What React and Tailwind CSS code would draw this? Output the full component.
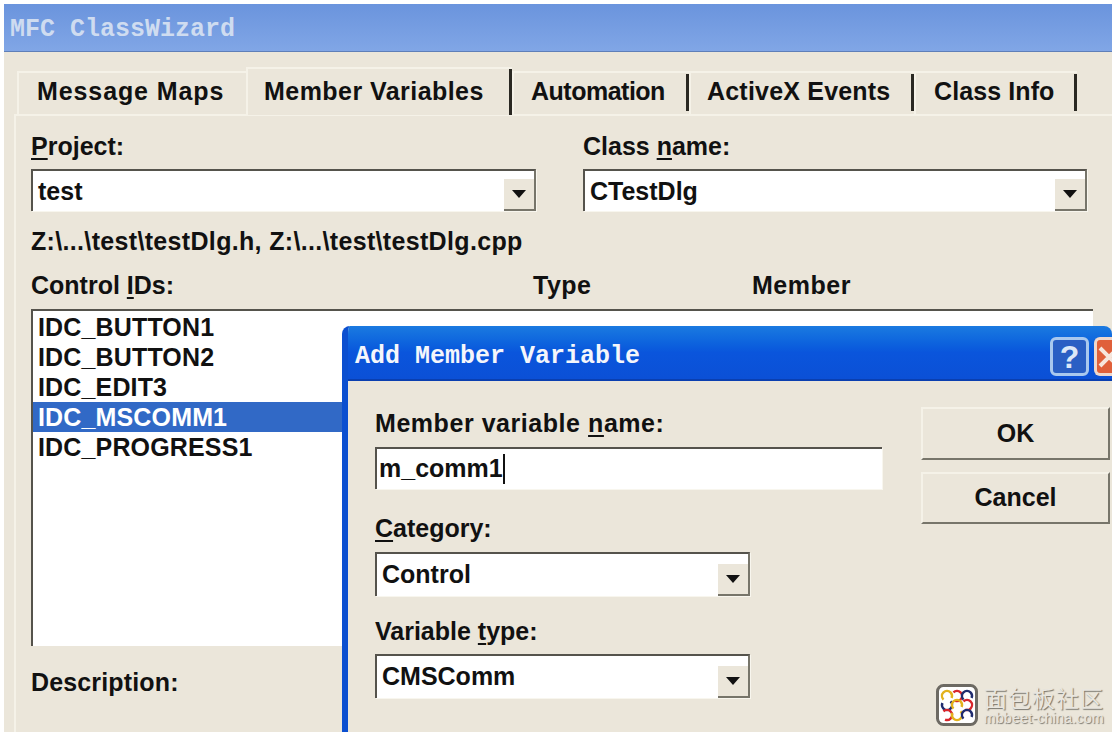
import { Fragment } from 'react'

const tabs = [
  { label: 'Message Maps', width: 'w-[229px]', text: 'pl-[18px] tracking-[0.9px]', noEdge: true },
  { label: 'Member Variables', width: 'w-[266px]', text: 'pl-[16px] tracking-[0.45px]', active: true },
  { label: 'Automation', width: 'w-[177px]', text: 'pl-[17px] tracking-[-0.5px]' },
  { label: 'ActiveX Events', width: 'w-[225px]', text: 'pl-[16px] tracking-[0.2px]' },
  { label: 'Class Info', width: 'w-[163px]', text: 'pl-[18px] tracking-[0.1px]' },
]

const controlIds = ['IDC_BUTTON1', 'IDC_BUTTON2', 'IDC_EDIT3', 'IDC_MSCOMM1', 'IDC_PROGRESS1']

const logoArcs = [
  [11, 12, '#e3b21c', 135],
  [21, 12, '#d8262c', 225],
  [31, 12, '#1f2b6e', 135],
  [11, 21, '#1f2b6e', 315],
  [21, 21, '#e3b21c', 135],
  [31, 21, '#d8262c', 225],
  [11, 31, '#d8262c', 225],
  [21, 31, '#e3b21c', 315],
  [31, 31, '#1f2b6e', 135],
]

function Arrow() {
  return (
    <span className="flex h-[32px] w-[30px] shrink-0 items-center justify-center self-end border-b-2 border-[#77756a] bg-[#ebe6da]">
      <svg width="14" height="8" viewBox="0 0 14 8" aria-hidden>
        <path d="M0 0h14L7 8z" fill="#111" />
      </svg>
    </span>
  )
}

function Combo({ value, className }) {
  return (
    <div
      className={`flex border-t-2 border-r-2 border-l-2 border-t-[#55534c] border-r-[#77756a] border-l-[#55534c] bg-white shadow-[1px_1px_0_#f8f6ee] ${className}`}
    >
      <span className="flex-1 pl-[5px] leading-[40px]">{value}</span>
      <Arrow />
    </div>
  )
}

function Underlined({ before = '', letter, after }) {
  return (
    <Fragment>
      {before}
      <span className="underline underline-offset-[3px]">{letter}</span>
      {after}
    </Fragment>
  )
}

function Logo() {
  return (
    <svg width="42" height="42" viewBox="0 0 42 42" aria-hidden>
      <rect x="1.5" y="1.5" width="39" height="39" rx="6" fill="#fff" stroke="#6d6a63" strokeWidth="3" />
      {logoArcs.map(([cx, cy, color, angle]) => (
        <circle
          key={`${cx}-${cy}`}
          cx={cx}
          cy={cy}
          r="5"
          fill="none"
          stroke={color}
          strokeWidth="2.4"
          strokeDasharray="21 11"
          transform={`rotate(${angle} ${cx} ${cy})`}
        />
      ))}
    </svg>
  )
}

export default function App() {
  return (
    <div className="relative h-[736px] w-[1116px] overflow-hidden bg-white px-[4px] pt-[4px] pb-[4px] font-['Liberation_Sans',sans-serif] text-[25px] font-bold text-[#111]">
      <div className="flex h-full w-[1108px] flex-col bg-[#ebe6da]">
        <div className="h-[48px] shrink-0 border-b border-[#5f7fb8] bg-gradient-to-b from-[#6a94dd] to-[#81a6e6] pt-[2px] pl-[6px] font-['Liberation_Mono',monospace] text-[25px] leading-[48px] text-[#cfdcf0]">
          MFC ClassWizard
        </div>

        <div className="mt-[15px] ml-[13px] flex h-[47px] shrink-0 items-end">
          {tabs.map((tab) => (
            <div
              key={tab.label}
              className={`${tab.width} ${tab.text} relative border-t-2 border-l-2 border-[#f5f2e8] ${
                tab.active ? 'z-10 -mb-[1px] h-[48px] bg-[#ebe6da] leading-[44px]' : 'h-[43px] leading-[36px]'
              }`}
            >
              {tab.label}
              {!tab.noEdge && (
                <span
                  className={`absolute right-0 w-[3px] bg-[#2a2822] ${tab.active ? 'top-0 bottom-0' : 'top-[1px] bottom-[3px]'}`}
                />
              )}
            </div>
          ))}
        </div>

        <div className="ml-[10px] min-h-0 flex-1 border-t-2 border-l-2 border-[#f5f2e8] pl-[15px]">
          <div className="flex gap-[47px] pt-[15px]">
            <div className="w-[505px]">
              <div className="leading-[30px]">
                <Underlined letter="P" after="roject:" />
              </div>
              <Combo value="test" className="mt-[8px] h-[42px]" />
            </div>
            <div className="w-[504px]">
              <div className="leading-[30px]">
                <Underlined before="Class " letter="n" after="ame:" />
              </div>
              <Combo value="CTestDlg" className="mt-[8px] h-[42px]" />
            </div>
          </div>

          <div className="mt-[15px] leading-[30px] tracking-[0.33px]">
            {'Z:\\...\\test\\testDlg.h, Z:\\...\\test\\testDlg.cpp'}
          </div>

          <div className="mt-[14px] flex leading-[30px]">
            <span className="w-[502px]">
              <Underlined before="Control " letter="I" after="Ds:" />
            </span>
            <span className="w-[219px] tracking-[0.5px]">Type</span>
            <span className="tracking-[0.5px]">Member</span>
          </div>

          <div className="mt-[9px] h-[337px] w-[1062px] border-t-2 border-l-2 border-[#55534c] bg-white pt-[1px]">
            {controlIds.map((id) => (
              <div
                key={id}
                className={`pl-[5px] leading-[30px] tracking-[0.15px] ${id === 'IDC_MSCOMM1' ? 'bg-[#3169c6] text-white' : ''}`}
              >
                {id}
              </div>
            ))}
          </div>

          <div className="mt-[21px] leading-[30px] tracking-[0.15px]">Description:</div>
        </div>
      </div>

      {/* dialog sits on top of the wizard window */}
      <div className="absolute top-[326px] left-[342px] flex h-[406px] w-[770px] flex-col overflow-hidden rounded-t-[8px] border-l-[6px] border-[#0b4fd0] bg-[#ebe6da]">
        <div className="-ml-[6px] flex h-[55px] shrink-0 items-center border-b-2 border-[#0a3fb0] bg-gradient-to-b from-[#1b7ae0] via-[#0a55dc] to-[#0b50d6] pt-[8px] pl-[13px] font-['Liberation_Mono',monospace] text-[25px] text-[#f4f6fb]">
          <span className="flex-1">Add Member Variable</span>
          <span className="mr-[5px] flex h-[39px] w-[39px] items-center justify-center rounded-[6px] border-[3px] border-[#a9c8ee] bg-[#2a5fc4] font-['Liberation_Sans',sans-serif] text-[32px] text-[#dce8f8]">
            ?
          </span>
          <span className="flex h-[39px] w-[18px] items-center overflow-hidden rounded-l-[6px] border-[3px] border-r-0 border-[#f0d8cc] bg-[#e0603a] pl-[1px]">
            <svg width="22" height="22" viewBox="0 0 22 22" className="shrink-0" aria-hidden>
              <path d="M2 2l18 18M20 2L2 20" stroke="#f6e6dc" strokeWidth="4" fill="none" />
            </svg>
          </span>
        </div>

        <div className="flex flex-1 pl-[27px]">
          <div className="w-[546px] pt-[27px]">
            <div className="leading-[30px] tracking-[0.55px]">
              <Underlined before="Member variable " letter="n" after="ame:" />
            </div>
            <div className="mt-[9px] flex h-[42px] w-[507px] items-center border-t-2 border-l-2 border-[#55534c] bg-white pl-[2px] shadow-[1px_1px_0_#f8f6ee]">
              m_comm1
              <span className="h-[30px] w-[2px] bg-[#111]" />
            </div>
            <div className="mt-[24px] leading-[30px]">
              <Underlined letter="C" after="ategory:" />
            </div>
            <Combo value="Control" className="mt-[9px] h-[44px] w-[375px]" />
            <div className="mt-[20px] leading-[30px]">
              Variable <Underlined letter="t" after="ype:" />
            </div>
            <Combo value="CMSComm" className="mt-[8px] h-[44px] w-[375px]" />
          </div>
          <div className="flex flex-col gap-[12px] pt-[26px]">
            <div className="flex h-[53px] w-[189px] items-center justify-center border-2 border-t-[#f5f2e8] border-r-[#77756a] border-b-[#77756a] border-l-[#f5f2e8]">
              OK
            </div>
            <div className="flex h-[52px] w-[189px] items-center justify-center border-2 border-t-[#f5f2e8] border-r-[#77756a] border-b-[#77756a] border-l-[#f5f2e8]">
              Cancel
            </div>
          </div>
        </div>
      </div>

      <div className="absolute top-[684px] left-[936px] flex gap-[6px]">
        <Logo />
        <div className="-mt-[1px] flex flex-col font-['Noto_Sans_CJK_SC',sans-serif] font-normal text-[#e9e6df] [text-shadow:1px_1px_1px_#77746c]">
          <span className="text-[23px] leading-[28px] tracking-[1px]">面包板社区</span>
          <span className="font-['Liberation_Sans',sans-serif] text-[14px] leading-[14px] tracking-[0.3px]">mbbeet-china.com</span>
        </div>
      </div>
    </div>
  )
}
